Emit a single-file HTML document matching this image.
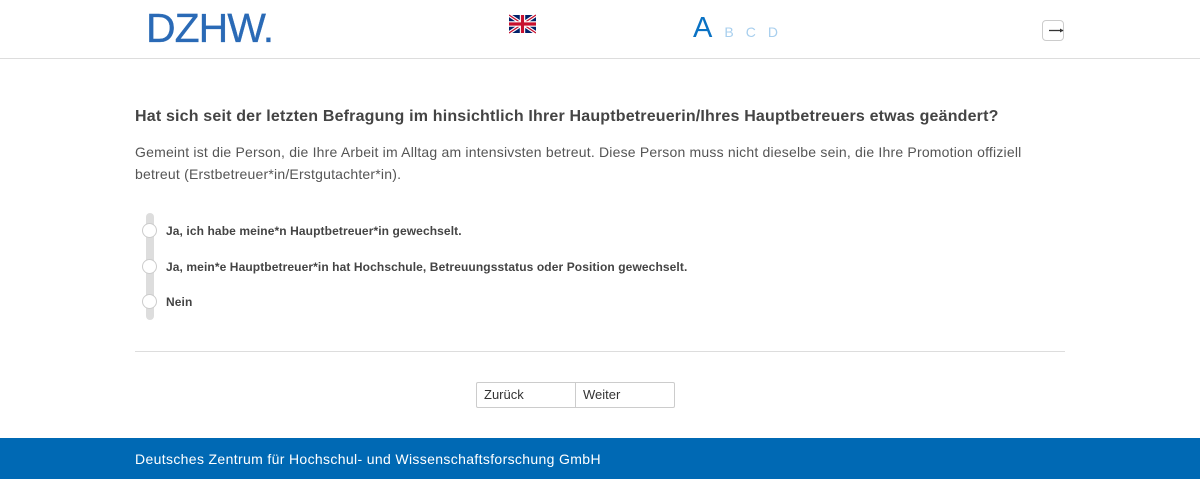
<!DOCTYPE html>
<html><head><meta charset="utf-8"><style>
*{margin:0;padding:0;box-sizing:border-box}
body{width:1200px;height:488px;background:#fff;font-family:"Liberation Sans",sans-serif;color:#444;position:relative;overflow:hidden}
.hdr{position:absolute;left:0;top:0;width:1200px;height:59px;border-bottom:1px solid #ddd}
.logo{position:absolute;left:146px;top:6px;font-size:41px;color:#2a6ab6;letter-spacing:-1px;font-family:"Liberation Sans",sans-serif;font-weight:normal;line-height:44px;-webkit-text-stroke:0.3px #2a6ab6}
.flag{position:absolute;left:509px;top:14px}
.abc{position:absolute;left:693px;top:12px;color:#0a72c4;font-size:29px;line-height:32px}
.abc span{font-size:14px;color:#a8cfee;margin-left:12px}
.out{position:absolute;left:1042px;top:20px;width:22px;height:21px;border:1px solid #ccc;border-radius:4px}
h1{position:absolute;left:135px;top:108px;font-size:16px;font-weight:bold;color:#444;letter-spacing:0.18px}
.desc{position:absolute;left:135px;top:141px;width:915px;font-size:14px;line-height:22px;color:#555;letter-spacing:0.2px}
.bar{position:absolute;left:146px;top:213px;width:8px;height:107px;background:#ddd;border-radius:4px}
.opt{position:absolute;left:142px;font-size:12px;font-weight:bold;color:#444;letter-spacing:0.1px}
.opt i{position:absolute;left:0;top:-1px;width:15px;height:15px;border:1px solid #ccc;border-radius:50%;background:#fff}
.opt b{position:absolute;left:24px;top:0;white-space:nowrap}
.hr{position:absolute;left:135px;top:351px;width:930px;border-top:1px solid #ddd}
.btns{position:absolute;left:476px;top:382px;width:199px;height:26px;border:1px solid #ccc;border-radius:2px;font-size:13px;color:#333}
.btns div{position:absolute;top:0;height:24px;line-height:24px;padding-left:7px}
.foot{position:absolute;left:0;top:438px;width:1200px;height:41px;background:#0069b4;color:#fff;font-size:14px;line-height:42px;padding-left:135px;letter-spacing:0.35px}
</style></head><body>
<div class="hdr">
<div class="logo">DZHW.</div>
<svg class="flag" width="27" height="20" viewBox="0 0 60 40"><rect width="60" height="40" fill="#012169"/><path d="M0 0L60 40M60 0L0 40" stroke="#fff" stroke-width="8"/><path d="M0 0L60 40M60 0L0 40" stroke="#c8102e" stroke-width="3"/><path d="M30 0V40M0 20H60" stroke="#fff" stroke-width="12"/><path d="M30 0V40M0 20H60" stroke="#c8102e" stroke-width="7"/></svg>
<div class="abc">A<span>B</span><span>C</span><span>D</span></div>
<div class="out"><svg width="22" height="21" style="position:absolute;left:-1px;top:-1px"><path d="M7 10.5H21" stroke="#333" stroke-width="1.3"/><path d="M18 8.5L21.5 10.5L18 12.5Z" fill="#333"/></svg></div>
</div>
<h1>Hat sich seit der letzten Befragung im hinsichtlich Ihrer Hauptbetreuerin/Ihres Hauptbetreuers etwas geändert?</h1>
<div class="desc">Gemeint ist die Person, die Ihre Arbeit im Alltag am intensivsten betreut. Diese Person muss nicht dieselbe sein, die Ihre Promotion offiziell betreut (Erstbetreuer*in/Erstgutachter*in).</div>
<div class="bar"></div>
<div class="opt" style="top:224px"><i></i><b>Ja, ich habe meine*n Hauptbetreuer*in gewechselt.</b></div>
<div class="opt" style="top:260px"><i></i><b>Ja, mein*e Hauptbetreuer*in hat Hochschule, Betreuungsstatus oder Position gewechselt.</b></div>
<div class="opt" style="top:295px"><i></i><b>Nein</b></div>
<div class="hr"></div>
<div class="btns"><div style="left:0;width:99px;border-right:1px solid #ccc">Zurück</div><div style="left:99px">Weiter</div></div>
<div class="foot">Deutsches Zentrum für Hochschul- und Wissenschaftsforschung GmbH</div>
</body></html>
